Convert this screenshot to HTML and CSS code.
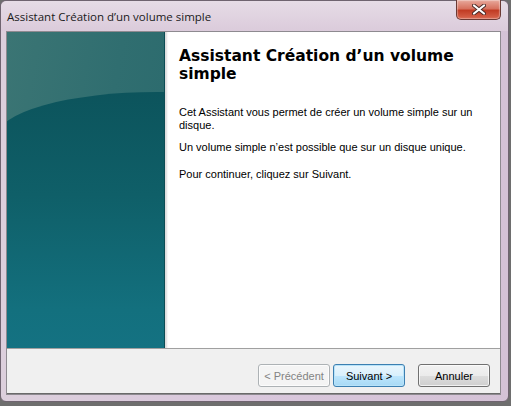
FILE: index.html
```html
<!DOCTYPE html>
<html lang="fr">
<head>
    <meta charset="UTF-8">
    <meta name="viewport" content="width=device-width, initial-scale=1.0">
    <title>Assistant Création d'un volume simple</title>
    <link rel="stylesheet" href="styles.css">
</head>
<body>
    <div class="window">
        <div class="titlebar">
            <span class="title">Assistant Création d’un volume simple</span>
            <button class="close" title="Fermer">
                <svg width="14" height="11" viewBox="0 0 14 11">
                    <path d="M2 1.5 L12 9.5 M12 1.5 L2 9.5" stroke="#4a2a26" stroke-width="4" stroke-linecap="round"/>
                    <path d="M2 1.5 L12 9.5 M12 1.5 L2 9.5" stroke="#fff" stroke-width="2.2" stroke-linecap="round"/>
                </svg>
            </button>
        </div>

        <div class="client">
            <div class="main">
                <div class="side"></div>
                <div class="content">
                    <h1>Assistant Création d’un volume simple</h1>
                    <p class="intro">Cet Assistant vous permet de créer un volume simple sur un disque.</p>
                    <p class="note">Un volume simple n’est possible que sur un disque unique.</p>
                    <p class="next-hint">Pour continuer, cliquez sur Suivant.</p>
                </div>
            </div>

            <div class="footer">
                <button class="btn" disabled>&lt; Précédent</button>
                <button class="btn default">Suivant &gt;</button>
                <button class="btn cancel">Annuler</button>
            </div>
        </div>
    </div>
</body>
</html>
```

FILE: styles.css
```css
body {
    margin: 0;
    background-color: #6e6e6e;
    font-family: "Liberation Sans", Arial, sans-serif;
}
.window {
    width: 509px;
    height: 402px;
    box-sizing: border-box;
    display: flex;
    flex-direction: column;
    background: linear-gradient(to right, #dccfdc, #d9c7dc 50%, #d4c2d6);
    border: 1px solid #6f6470;
    border-radius: 6px;
}
.titlebar {
    height: 30px;
    display: flex;
    align-items: flex-start;
    padding-left: 6px;
    background: linear-gradient(to bottom, #e6dce6, #dbcbdb);
    border-radius: 6px 6px 0 0;
}
.title {
    font-family: "Open Sans", "Noto Sans", sans-serif;
    font-size: 11.5px;
    color: #1a1a1a;
    margin-top: 8px;
}
.close {
    margin-left: auto;
    margin-right: 7px;
    margin-top: -1px;
    width: 45px;
    height: 20px;
    padding: 0;
    display: flex;
    align-items: center;
    justify-content: center;
    border: 1px solid #6b3a34;
    border-top: none;
    border-radius: 0 0 5px 5px;
    background: linear-gradient(to bottom, #e8a99c, #d7725f 45%, #c13c24 55%, #d8664e);
    box-shadow: inset 0 0 1px 1px rgba(255, 255, 255, 0.35);
}
.client {
    flex: 1;
    margin: 0 7px 6px 5px;
    display: flex;
    flex-direction: column;
    border: 1px solid #8e8a90;
    background-color: #f0f0f0;
}
.main {
    height: 316px;
    display: flex;
    border-bottom: 1px solid #a0a0a0;
}
.side {
    width: 157px;
    position: relative;
    overflow: hidden;
    background: linear-gradient(100deg, #3b7574, #306e70 55%, #2a6a6d);
    border-right: 1px solid #0c4c54;
}
/* darker lower body of the banner, with its curved glossy edge */
.side::before {
    content: "";
    position: absolute;
    top: 60px;
    left: -10px;
    width: 320px;
    bottom: 0;
    border-top-left-radius: 160px 45px;
    background: linear-gradient(to bottom, #0c545c, #0f5f68 40%, #13707e 85%, #147282);
}
.content {
    flex: 1;
    background-color: #fff;
    padding: 15px 20px 0 14px;
    box-shadow: inset 3px 0 2px -1px #dcdcdc;
}
h1 {
    margin: 0 0 23px;
    font-family: "DejaVu Sans", Verdana, sans-serif;
    font-size: 15.5px;
    line-height: 18px;
    color: #000;
}
p {
    margin: 0;
    font-size: 11px;
    line-height: 13px;
    color: #000;
}
.note {
    margin-top: 9px;
}
.next-hint {
    margin-top: 14px;
}
.footer {
    flex: 1;
    display: flex;
    align-items: flex-start;
    justify-content: flex-end;
    padding: 15px 10px 0 0;
    border-bottom: 1px solid #6a6a6a;
}
.btn {
    width: 72px;
    height: 23px;
    margin-left: 3px;
    padding: 0;
    font-family: "Liberation Sans", Arial, sans-serif;
    font-size: 11px;
    color: #000;
    border: 1px solid #707070;
    border-radius: 3px;
    background: linear-gradient(to bottom, #f2f2f2, #ebebeb 50%, #dddddd 50%, #cfcfcf);
    box-shadow: inset 0 0 0 1px rgba(255, 255, 255, 0.7);
}
.btn:disabled {
    color: #838383;
    border-color: #adb2b5;
    background: #f4f4f4;
}
.btn.default {
    border-color: #3c7fb1;
    background: linear-gradient(to bottom, #eaf6fd, #d9f0fc 50%, #bee6fd 50%, #a7d9f5);
    box-shadow: inset 0 0 0 1px #b8e3f9;
}
.btn.cancel {
    margin-left: 13px;
}
```
